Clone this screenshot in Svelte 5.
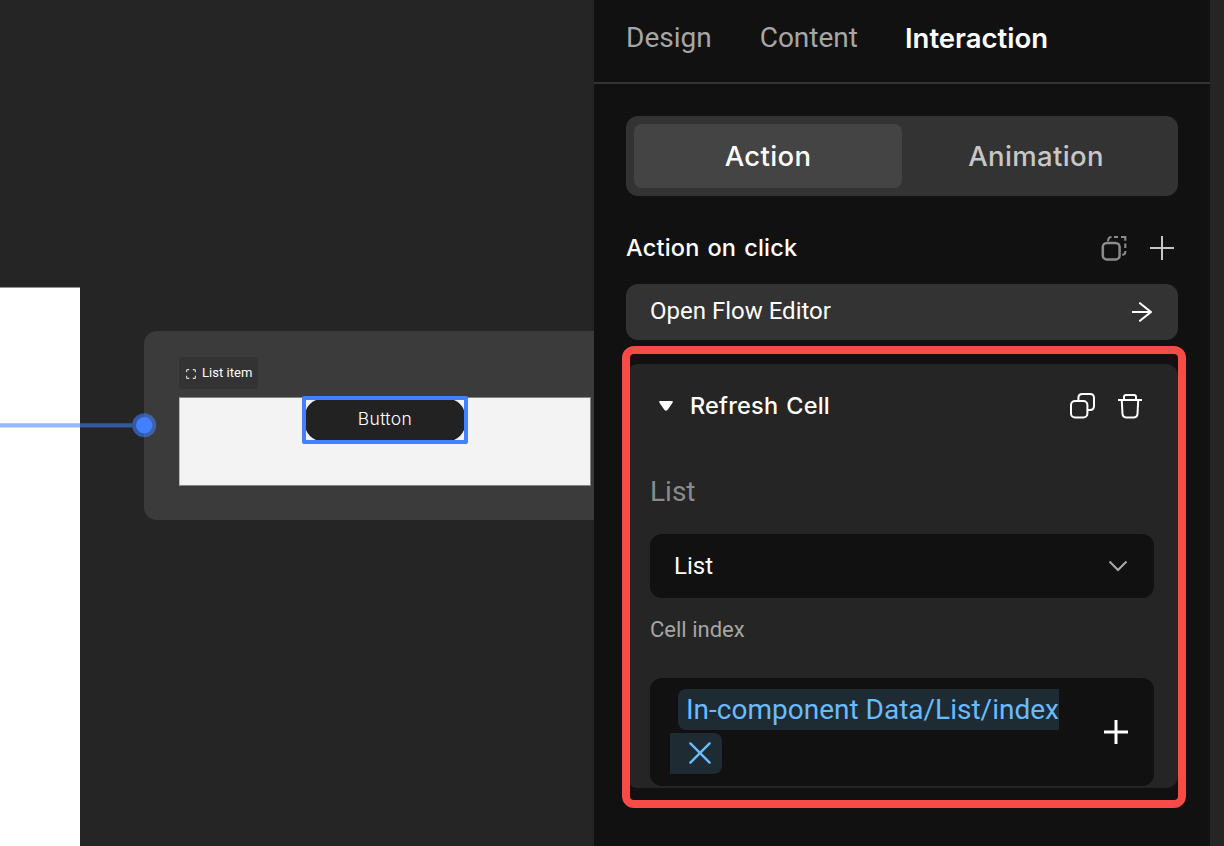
<script>
  const tabs = ['Design', 'Content', 'Interaction'];
  let activeTab = $state('Interaction');
  let mode = $state('Action');
</script>

<div class="app">
  <main class="canvas">
    <div class="artboard"></div>
    <div class="frame"></div>
    <div class="tag">
      <svg width="10" height="10" viewBox="0 0 10 10" fill="none" stroke="#ddd" stroke-width="1.1"><path d="M.6 3.2V1.6q0-1 1-1H3.2M6.8.6H8.4q1 0 1 1V3.2M9.4 6.8V8.4q0 1-1 1H6.8M3.2 9.4H1.6q-1 0-1-1V6.8" /></svg>
      <span>List item</span>
    </div>
    <div class="cell"></div>
    <div class="selected"><div class="pill"><span>Button</span></div></div>
    <svg class="link" width="158" height="26" viewBox="0 0 158 26">
      <path d="M0 13.4H132.3" stroke="#4280ff" stroke-width="4.2" opacity=".55" />
      <circle cx="144.2" cy="13.2" r="12" fill="#4280ff" opacity=".58" />
      <circle cx="144.2" cy="13.2" r="8.2" fill="#4280ff" />
    </svg>
  </main>

  <aside class="panel">
    <nav>
      {#each tabs as tab}
        <button class="tab" class:active={tab === activeTab} onclick={() => (activeTab = tab)}>{tab}</button>
      {/each}
    </nav>
    <div class="segment">
      {#each ['Action', 'Animation'] as item}
        <button class:on={item === mode} onclick={() => (mode = item)}>{item}</button>
      {/each}
    </div>
    <div class="heading">
      <span>Action on click</span>
      <div class="tools">
        <svg width="28" height="28" viewBox="0 0 28 28" fill="none" stroke="#8b8b8b" stroke-width="2.5"><rect x="2.8" y="9" width="16.8" height="16.4" rx="4" /><path d="M8 7.2Q8.2 3 11.5 3M14 3h4M21 3H25.3V6.8M25.3 9.5v4.5M25.3 17v1.2q0 2-3 2.8" stroke-width="2.1" /></svg>
        <svg width="24" height="24" viewBox="0 0 24 24" stroke="#c7c7c7" stroke-width="2"><path d="M0 12H24M12 0V24" /></svg>
      </div>
    </div>
    <button class="flow">
      <span>Open Flow Editor</span>
      <svg width="20" height="20" viewBox="0 0 20 20" fill="none" stroke="#fff" stroke-width="2" stroke-linejoin="round"><path d="M0 10H19M7.3 .7L19 10 7.3 19.3" /></svg>
    </button>
    <section class="card">
      <header>
        <svg width="14" height="10" viewBox="0 0 14 10"><path d="M1.2 0H12.8Q14.6 .3 13.4 2L8.5 8.9Q7 10.4 5.5 8.9L.6 2Q-.6 .3 1.2 0Z" fill="#fff" /></svg>
        <span class="title">Refresh Cell</span>
        <svg width="26" height="26" viewBox="0 0 26 26" fill="none" stroke="#fff" stroke-width="2"><rect x="1" y="8" width="16.4" height="16.4" rx="4" /><path d="M8.4 8V5Q8.4 1 12.4 1H20Q24 1 24 5V13Q24 17 20 17H17.8" /></svg>
        <svg width="24" height="26" viewBox="0 0 24 26" fill="none" stroke="#fff" stroke-width="2"><path d="M0 7H24M6 6.5V4Q6 2 8 2H16Q18 2 18 4V6.5M3.8 7.5L4.5 21Q4.8 24.4 8 24.4H16Q19.2 24.4 19.5 21L20.2 7.5" /></svg>
      </header>
      <div class="label">List</div>
      <div class="select">
        <span>List</span>
        <svg width="20" height="12" viewBox="0 0 20 12" fill="none" stroke="#aaa" stroke-width="2"><path d="M1.5 1.5L10 10 18.5 1.5" /></svg>
      </div>
      <div class="label small">Cell index</div>
      <div class="index">
        <div class="token">
          <span class="path">In-component Data/List/index</span>
          <span class="remove"><svg width="22" height="22" viewBox="0 0 22 22" stroke="#69bcff" stroke-width="2.4" stroke-linecap="round"><path d="M1.4 1.4L20.6 20.6M20.6 1.4L1.4 20.6" /></svg></span>
        </div>
        <svg class="plus" width="24" height="24" viewBox="0 0 24 24" stroke="#fff" stroke-width="3"><path d="M0 12H24M12 0V24" /></svg>
      </div>
    </section>
    <div class="highlight"></div>
  </aside>
</div>

<style>
  :global(body) { margin: 0; }
  .app { display: flex; width: 1224px; height: 846px; overflow: hidden; background: #252525; font-family: Roboto, sans-serif; color: #fff; }
  button { border: 0; padding: 0; background: none; color: inherit; font: inherit; text-align: left; }
  svg { display: block; flex: none; }
  .canvas { position: relative; width: 594px; overflow: hidden; flex: none; }
  .artboard { position: absolute; left: 0; top: 287px; width: 80px; height: 559px; box-sizing: border-box; border-top: 1px solid #8f8f8f; background: #fff; }
  .frame { position: absolute; left: 144px; top: 331px; width: 480px; height: 189px; box-sizing: border-box; border-radius: 13px; background: #3b3b3b; }
  .tag { position: absolute; left: 179px; top: 357px; width: 79px; height: 32px; box-sizing: border-box; padding: 0 0 2px 7px; display: flex; align-items: center; gap: 6px; background: #333; border-radius: 3px; font-size: 13px; letter-spacing: .03px; white-space: nowrap; }
  .tag svg { margin-top: 3px; }
  .cell { position: absolute; left: 179px; top: 397px; width: 412px; height: 89px; box-sizing: border-box; background: #f3f3f3; border: 1px solid #858585; border-left-color: #b8b8b8; }
  .selected { position: absolute; left: 302px; top: 396px; width: 166px; height: 48px; box-sizing: border-box; border: 4px solid #4280ff; border-radius: 2px; background: #f3f3f3; overflow: hidden; }
  .pill { width: 160px; height: 42px; margin: -1px; border-radius: 17px; background: #222; display: flex; justify-content: center; align-items: center; font-family: Inter, sans-serif; font-weight: 300; font-size: 17.5px; letter-spacing: .4px; }
  .pill span { padding-bottom: 4px; }
  .link { position: absolute; left: 0; top: 412px; }
  .panel { position: relative; width: 616px; flex: none; box-sizing: border-box; background: #111; display: flex; flex-direction: column; }
  nav { height: 84px; box-sizing: border-box; border-bottom: 2px solid #333; padding: 20px 32px 0; display: flex; gap: 48px; align-items: flex-start; }
  .tab { font-size: 28px; line-height: 36px; color: #a6a6a6; }
  .tab.active { color: #fff; font-family: Inter, sans-serif; font-weight: 600; font-size: 27.5px; letter-spacing: 0; margin-left: -1px; }
  .segment { height: 80px; box-sizing: border-box; margin: 32px 32px 0; padding: 8px; border-radius: 12px; background: #333; display: flex; }
  .segment button { flex: 1; text-align: center; border-radius: 8px; font-family: Inter, sans-serif; font-size: 27.5px; font-weight: 500; letter-spacing: .35px; color: #c7c7c7; }
  .segment .on { background: #444; color: #fff; }
  .heading { margin: 32px 32px 0; height: 40px; display: flex; align-items: center; justify-content: space-between; font-family: Inter, sans-serif; font-size: 23.5px; font-weight: 500; letter-spacing: .2px; word-spacing: 1.5px; }
  .heading > span { padding-bottom: 2px; }
  .tools { display: flex; align-items: center; gap: 22px; padding-right: 4px; }
  .flow { margin: 16px 32px 0; height: 56px; box-sizing: border-box; border-radius: 12px; background: #333; display: flex; justify-content: space-between; align-items: center; padding: 0 26px 0 24px; font-size: 24px; }
  .flow span { padding-bottom: 2px; }
  .card { margin: 24px 32px 0; height: 424px; box-sizing: border-box; border-radius: 12px; background: #252525; padding: 0 24px; display: flex; flex-direction: column; }
  header { height: 84px; display: flex; align-items: center; padding: 0 12px 0 9px; }
  .title { margin-left: 17px; padding-bottom: 2px; flex: 1; font-family: Inter, sans-serif; font-size: 23.5px; font-weight: 500; letter-spacing: .2px; word-spacing: 1.5px; }
  header svg:nth-of-type(3) { margin-left: 22px; }
  .label { margin-top: 26px; height: 36px; line-height: 36px; font-size: 28px; color: #8b8b8b; }
  .select { margin-top: 24px; height: 64px; border-radius: 12px; background: #111; display: flex; align-items: center; justify-content: space-between; padding: 0 26px 0 24px; font-size: 24px; }
  .label.small { margin-top: 14px; font-size: 22px; color: #a6a6a6; }
  .index { margin-top: 30px; height: 108px; box-sizing: border-box; border-radius: 12px; background: #111; padding: 11px 26px 12px 20px; display: flex; align-items: center; justify-content: space-between; }
  .token { display: flex; flex-direction: column; gap: 3px; align-items: flex-start; }
  .path { margin-left: 8px; height: 41px; width: 381px; box-sizing: border-box; padding-left: 8px; line-height: 42px; font-size: 28px; white-space: nowrap; color: #69bcff; background: #1f2b33; border-radius: 8px 0 0 8px; }
  .remove { width: 52px; height: 41px; box-sizing: border-box; padding: 0 0 1px 19px; display: flex; align-items: center; background: #1f2b33; border-radius: 0 8px 8px 0; }
  .highlight { position: absolute; left: 28px; top: 346px; width: 564px; height: 462px; box-sizing: border-box; border: 8px solid #f84b47; border-radius: 12px; }
</style>
